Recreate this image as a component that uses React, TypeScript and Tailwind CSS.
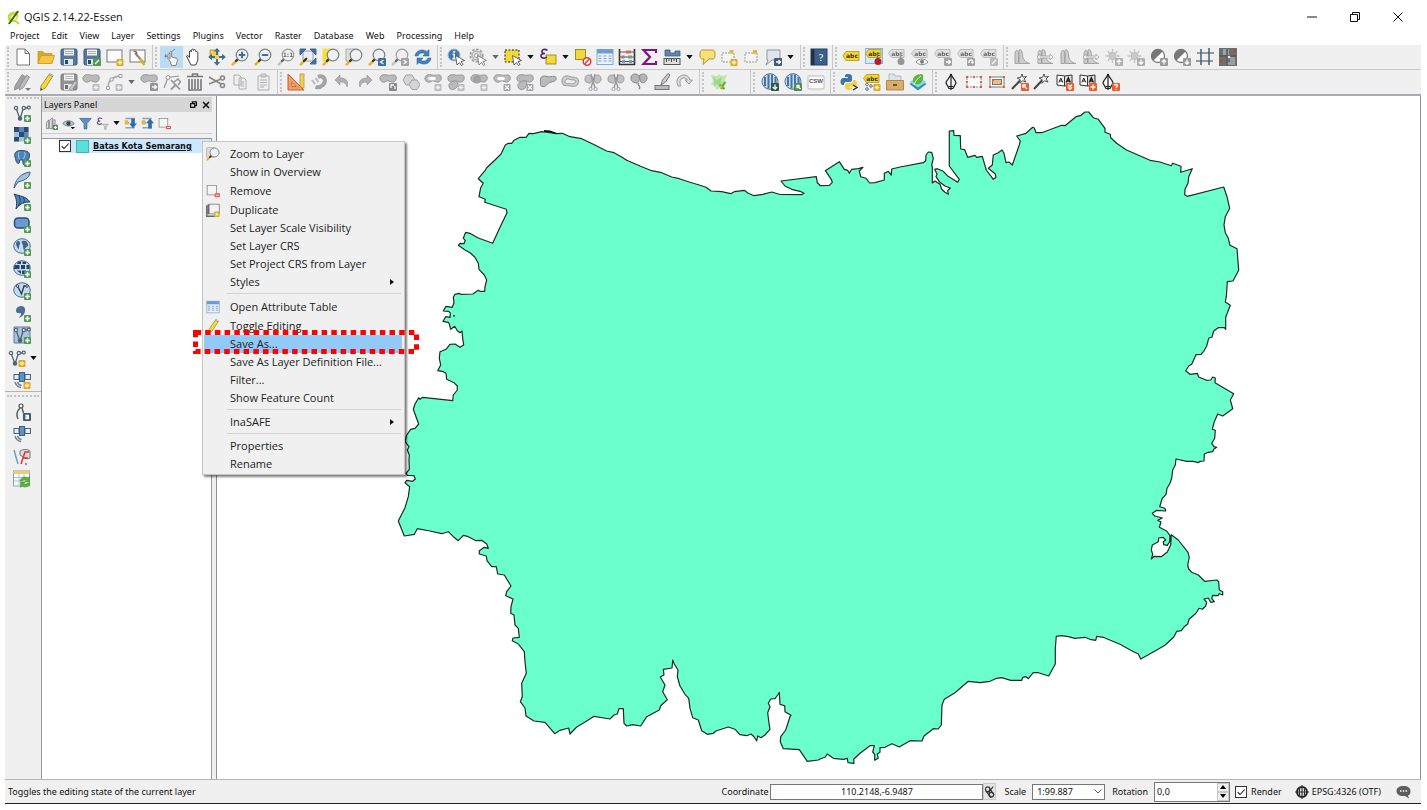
import type { ReactNode } from "react";

type Tool = { name: string; icon: ReactNode; drop?: boolean; off?: boolean; on?: boolean };

/* ---------- badges and shared shapes, all on an 18 x 18 grid ---------- */

const Plus = (
  <g>
    <rect x="11" y="11" width="7" height="7" rx="1" fill="#4f9a55" />
    <path d="M14.5 12.3v4.4M12.3 14.5h4.4" stroke="#fff" strokeWidth="1.6" />
  </g>
);
const Minus = (
  <g>
    <rect x="11" y="12" width="7" height="5" rx="1.5" fill="#ee5050" />
    <path d="M12.5 14.5h4" stroke="#fff" strokeWidth="1.3" />
  </g>
);
const Star = (
  <g>
    <rect x="10.5" y="11" width="7" height="7" rx="1" fill="#d9a91e" />
    <path d="M14 12v5M11.6 14.5h4.8M12.3 12.8l3.4 3.4M15.7 12.8l-3.4 3.4" stroke="#fff6c8" strokeWidth="0.9" />
  </g>
);
const Cross = (
  <g>
    <rect x="10.5" y="11" width="7" height="7" rx="1" fill="#8a8a8a" />
    <path d="M12 12.5l4 4M16 12.5l-4 4" stroke="#fff" strokeWidth="1.2" />
  </g>
);
const Handle = (
  <g strokeLinecap="round">
    <path d="M7.2 10.8L1.8 16.4" stroke="#e0b52c" strokeWidth="2.6" />
    <path d="M7.2 10.8L5 13" stroke="#333" strokeWidth="2.2" />
  </g>
);
const glass = (inner?: ReactNode) => (
  <g>
    {Handle}
    <circle cx="11" cy="7" r="5.8" fill="#eef1f4" stroke="#808080" strokeWidth="1.2" />
    {inner}
  </g>
);
const blob = (
  <path d="M1 6C.5 2 4.500 1 8 2s8-1.500 9 1.500-1 6-4 5.500-4-2-6-.5S1.500 9 1 6z" fill="#a8a8a8" stroke="#777" strokeWidth="1" />
);
const lowBlob = (
  <path d="M2 13.500c-1-3 2-3.500 3.500-5C7 7 11 8 11 10.500s-2 5.500-4.500 6-4-.5-4.500-3z" fill="#a8a8a8" stroke="#777" strokeWidth="1" />
);
const disk = (
  <g>
    <rect x="1" y="1" width="16" height="16" rx="1.500" fill="#54789f" stroke="#3b5778" />
    <rect x="4" y="1.500" width="10" height="6" fill="#f3f3f3" />
    <path d="M5 3.500h8M5 5.500h8" stroke="#999" strokeWidth="0.8" />
    <rect x="4" y="11" width="9" height="6" fill="#dfe5ea" />
    <rect x="5" y="12" width="3" height="4" fill="#2e4660" />
  </g>
);
const pencil = (
  <g>
    <path d="M4 13L12 1.500l3.500 2L8 15.500l-4.500 2z" fill="#f0d842" stroke="#96801c" strokeWidth="0.8" />
    <path d="M12 1.500l3.500 2 .6-1.200-3.400-2z" fill="#eee" stroke="#777" strokeWidth="0.600" />
    <path d="M3.500 17.500l.3-2.500 1.700 1.200z" fill="#333" />
  </g>
);
const page = <path d="M3 1h8l4.500 4.500V17H3zM11 1v4.500h4.500" fill="#fff" stroke="#777" />;
const sheet = <rect x="1" y="2" width="15" height="12" fill="#fbfbfb" stroke="#777" />;
const vee = (
  <g fill="#fff" stroke="#4f6575" strokeWidth="1.300">
    <path d="M3 4l4 11 3.500-11 5 0" fill="none" />
    <circle cx="3" cy="4" r="1.600" />
    <circle cx="7" cy="14.500" r="1.600" fill="#4f6575" />
    <circle cx="10.800" cy="4" r="1.600" />
    <circle cx="15.800" cy="3.600" r="1.500" />
  </g>
);
const globe = (
  <g fill="none" stroke="#4d6f96" strokeWidth="1">
    <ellipse cx="9" cy="8" rx="8.300" ry="7.300" fill="#c3daf0" />
  </g>
);
const table = (
  <g>
    <rect x="1" y="1.500" width="16" height="15" fill="#e9f2fb" stroke="#87a9d0" />
    <rect x="1" y="1.500" width="16" height="4" fill="#6d9ad2" />
    <path d="M2.500 8h3M7.500 8h3M12.500 8h3M2.500 10.500h3M7.500 10.500h3M12.500 10.500h3M2.500 13h3M7.500 13h3M12.500 13h3" stroke="#7fa3cd" strokeWidth="1.200" />
  </g>
);
const cursor = <path d="M8.500 7.500l9 5-3.500 1 2 3-1.500 1-2-3-2.500 2.500z" fill="#fff" stroke="#555" strokeWidth="0.9" />;
const tag = (fill: string, stroke: string) => (
  <g>
    <path d="M1 8l3-4.500h13v9H4z" fill={fill} stroke={stroke} strokeWidth="0.8" />
    <text x="10" y="10.300" fontSize="6" fontWeight="700" textAnchor="middle" fill="#333" fontFamily="DejaVu Sans, sans-serif">abc</text>
  </g>
);
const smallTag = (fill: string, stroke: string) => (
  <g>
    <path d="M.5 5.500l3-4H16v8H3.500z" fill={fill} stroke={stroke} strokeWidth="0.8" />
    <text x="9.200" y="7.700" fontSize="6" fontWeight="700" textAnchor="middle" fill="#333" fontFamily="DejaVu Sans, sans-serif">abc</text>
  </g>
);
const elephant = (
  <g>
    <path d="M2 8C1 4 3 1.500 8 1.500s8.500 1 8.500 4.500-1 5-2.500 5.500c0 2-.5 4.500-2.500 4.500S10 13 9.500 10.500c-1 .8-2 .8-3 0 .3 2 0 4-1.300 4S2.800 12 2 8z" fill="#4d83b8" stroke="#2a4f78" />
    <path d="M6 3c-1 3-.5 5 .5 7.500M11.500 3c1 2 .5 5-1.500 7" fill="none" stroke="#bcd4ea" strokeWidth="0.800" />
  </g>
);
const sat = (
  <g stroke="#34557a" strokeWidth="0.9">
    <rect x="1" y="3.500" width="5" height="5" fill="#e3ecf5" />
    <rect x="12" y="3.500" width="5.500" height="5" fill="#e3ecf5" />
    <rect x="6.500" y="1.500" width="5" height="9" fill="#5e93c8" />
    <path d="M2 11c1 3.500 3 5 6 5.500M4.500 11c.5 2 2 3 4 3.500" fill="none" strokeWidth="1.400" stroke="#6e8296" />
  </g>
);
const hist = (
  <g fill="#c2c2c2" stroke="#8a8a8a" strokeWidth="1">
    <path d="M2 15.500V6c0-4.500 3-5 3.500-1v10.500z" />
    <path d="M6 15.500V2c2-1 3 0 3.500 5 .5 5 3 7.500 7.500 8.500z" />
  </g>
);
const sun = (
  <g stroke="#b0b0b0" strokeWidth="1.300">
    <circle cx="7.500" cy="8" r="3.500" fill="#bdbdbd" />
    <path d="M7.500 1v2.500M7.500 12.500v2.500M.5 8h2.500M12 8h2.500M2.700 3.200l1.600 1.600M12.300 3.200l-1.600 1.600M2.700 12.800l1.600-1.600" />
  </g>
);
const contrast = (
  <g>
    <circle cx="8" cy="8" r="6.500" fill="#fff" stroke="#777" strokeWidth="1.300" />
    <path d="M3.400 12.600A6.500 6.500 0 0 1 12.600 3.400z" fill="#777" />
  </g>
);
const badge = (d: string, fill: string) => (
  <g>
    <rect x="10" y="10" width="8" height="8" rx="1" fill={fill} />
    <path d={d} fill="none" stroke="#fff" strokeWidth="1.300" />
  </g>
);
const up = badge("M14 16.500v-4M11.800 14l2.200-2.200 2.200 2.200", "#9a9a9a");
const down = badge("M14 11.500v4M11.800 14l2.200 2.200 2.200-2.200", "#9a9a9a");
const orange = "#f15a29";
const nib = (
  <g fill="none" stroke="#222" strokeWidth="1.200">
    <path d="M9 1C8 5 4 7 4 10l3 5.500h4l3-5.500c0-3-4-5-5-9z" fill="#f6f6f6" />
    <path d="M9 1v16" />
    <path d="M6.500 13.500h5" />
  </g>
);
const wand = (
  <g stroke="#444" strokeWidth="0.900" fill="none">
    <path d="M1 16l8-8.500" strokeWidth="2" />
    <path d="M11 1l1 3 3.500-.5-2.500 2.500 2 3-3.500-1.200-2.500 2.500.2-3.600-3-1.700 3.500-.7z" fill="#f4f4f4" />
  </g>
);
const labels = (
  <g>
    <path d="M1 2l7.500 1v10L1 12z" fill="#fff" stroke="#333" />
    <path d="M8.500 3L16 2v10l-7.500 1z" fill="#ddd" stroke="#333" />
    <path d="M2.800 9.500l2-4.500 2 4.500M3.500 8h2.500" stroke="#222" fill="none" />
    <path d="M10.300 9.500l2-4.500 2 4.500M11 8h2.500" stroke="#222" fill="none" strokeWidth="1.600" />
  </g>
);
const lens = <rect x="1.500" y="1.500" width="10" height="10" fill="#f3d838" stroke="#8b7a1d" strokeWidth="0.8" />;

const I = {
  newFile: page,
  open: (
    <g fill="#f3c645" stroke="#cf9c25" strokeWidth="0.9">
      <path d="M1 15.500V3.500h5l1.500 2H15v3" fill="#d9a42f" />
      <path d="M1 15.500L4 7.500h13.500L15 15.500z" />
    </g>
  ),
  save: disk,
  saveAs: <g>{disk}{badge("M12 16l4-4", "#4f9a55")}</g>,
  composer: <g>{sheet}{Star}</g>,
  composerMgr: (
    <g>
      {sheet}
      <path d="M6 5l9 10" stroke="#888" strokeWidth="2" />
      <path d="M11 11l4.500 6" stroke="#dcb02a" strokeWidth="2.600" />
      <path d="M4.500 3.500c2-1 4 1 3 3" fill="none" stroke="#777" strokeWidth="1.500" />
    </g>
  ),
  touch: (
    <g>
      <path d="M3 9L13 1M3 9l.5-3M3 9l3-.5" stroke="#777" fill="none" strokeWidth="0.900" />
      <path d="M8 13L5.500 10c1-1 2 .2 2.500.8V4.500c0-1.300 1.700-1.300 1.700 0V9l4.800 1.300c1 .4 1 1.500.7 3L14 17.500H9.500z" fill="#f7f7f7" stroke="#777" strokeWidth="0.900" />
    </g>
  ),
  pan: <path d="M6 17L3.500 12 1.500 8c1-1 2 0 3 1.500L4.500 3c1-1 1.700 0 1.800 1L6.800 1.500c1-1 1.800 0 1.900 1V2c1-1 2-.4 2 .8l.2 1c1-.8 1.900 0 1.900 1V12l-2 5z" fill="#fff" stroke="#444" />,
  panSel: (
    <g>
      <path d="M2 2h8v8H2z" fill="#f2d53c" stroke="#998420" strokeWidth="0.700" />
      <path d="M9 0l3.200 3.500H10v4.500h4V5.800L17.800 9 14 12.200V10h-4v4h2.200L9 17.800 5.800 14H8v-4H4v2.200L.2 9 4 5.800V8h4V3.500H5.800z" fill="#3e6d9d" />
      <circle cx="9" cy="9" r="2.200" fill="#f2d53c" />
    </g>
  ),
  zoomIn: glass(<path d="M11 3.800v6.400M7.800 7h6.400" stroke="#3b6ea5" strokeWidth="2" />),
  zoomOut: glass(<path d="M7.800 7h6.400" stroke="#3b6ea5" strokeWidth="2" />),
  zoomOne: glass(<text x="11" y="9.200" fontSize="6" fontWeight="700" textAnchor="middle" fill="#444" fontFamily="DejaVu Sans, sans-serif">1:1</text>),
  full: (
    <g>
      <rect x="4" y="3" width="10" height="10" fill="#e9edf1" stroke="#889" strokeWidth="0.800" />
      <path d="M1 1h6L1 7zM17 1h-6l6 6zM17 16v-6l-6 6z" fill="#3e6d9d" stroke="#3e6d9d" />
      {Handle}
    </g>
  ),
  zoomSel: <g><rect x="0.500" y="0.500" width="9" height="13" fill="#f3e13f" />{glass()}</g>,
  zoomLayer: <g><rect x="1" y="1" width="9" height="12" fill="#ddd" stroke="#999" strokeWidth="0.700" />{glass()}</g>,
  last: <g>{glass()}{badge("M15.500 12l-3 2 3 2", "#3b6ea5")}</g>,
  next: <g>{glass()}{badge("M12.500 12l3 2-3 2", "#888")}</g>,
  refresh: (
    <g fill="#3f82c4" stroke="#2d5f94" strokeWidth="0.500">
      <path d="M1 8C1.500 2.500 8 0 13 3.500L15 1.500V8H9l2-2.200C8.500 4 5 5 4 8z" />
      <path d="M17 10c-.5 5.500-7 8-12 4.500L3 16.500V10h6l-2 2.200c2.500 1.800 6 .8 7-2.200z" />
    </g>
  ),
  identify: (
    <g>
      <circle cx="7" cy="7" r="6" fill="#3f77b0" stroke="#9dbbdc" />
      <circle cx="7.200" cy="3.800" r="1.100" fill="#fff" />
      <path d="M7.200 6v5M5.500 6.200h1.700M5.500 10.800h3.400" stroke="#fff" strokeWidth="1.400" />
      {cursor}
    </g>
  ),
  gear: (
    <g>
      <circle cx="7.500" cy="7.500" r="6.200" fill="none" stroke="#888" strokeWidth="1.800" strokeDasharray="2.500 1.500" />
      <circle cx="7.500" cy="7.500" r="4.600" fill="#ccc" stroke="#888" />
      <circle cx="7.500" cy="7.500" r="1.800" fill="#fff" stroke="#888" />
      {cursor}
    </g>
  ),
  select: (
    <g>
      <rect x="1" y="2" width="14" height="12" fill="#f3d838" stroke="#222" strokeDasharray="2 1.500" />
      {cursor}
    </g>
  ),
  expr: (
    <g>
      <rect x="7" y="7" width="10" height="9" fill="#f3d838" stroke="#8b7a1d" strokeWidth="0.800" />
      <path d="M8.500 2.500C6 .5 2.500 1.500 3 4c.2 1.300 1.500 1.500 3 1.500C3.500 5.500 1.500 6.500 2 8.500c.5 2 4 2.200 6 .5" fill="none" stroke="#4d2a66" strokeWidth="1.600" />
    </g>
  ),
  deselect: (
    <g>
      {lens}
      <circle cx="13" cy="13.500" r="3.800" fill="#fff" stroke="#dc3c3c" strokeWidth="1.500" />
      <path d="M10.500 16l5-5" stroke="#dc3c3c" strokeWidth="1.500" />
    </g>
  ),
  table,
  abacus: (
    <g strokeWidth="1.200">
      <path d="M1.500 1v16M16.500 1v16M1 16.500h16" stroke="#333" strokeWidth="1.600" fill="none" />
      <path d="M1 4h16M1 9h16M1 13.500h16" stroke="#555" />
      <path d="M8 4h5M3.500 9h3" stroke="#cf6a5e" strokeWidth="3" />
      <path d="M10 9h4" stroke="#5dac68" strokeWidth="3" />
      <path d="M4 13.500h3M11 13.500h3" stroke="#6d9ccc" strokeWidth="3" />
    </g>
  ),
  sigma: <path d="M15 5V2H2.500L9 9l-6.500 7H15v-3" fill="none" stroke="#7d1683" strokeWidth="2.200" />,
  ruler: (
    <g>
      <path d="M2 2h5v3h5V3l5 0v5H2z" fill="#5f87ab" stroke="#3d5a78" strokeWidth="0.800" />
      <rect x="1" y="10.500" width="16" height="6" fill="#dedede" stroke="#555" />
      <path d="M3.500 11v3M6 11v2M8.500 11v3M11 11v2M13.500 11v3" stroke="#444" />
    </g>
  ),
  tip: <path d="M2 5c0-2 1-3 3-3h9c2 0 3 1 3 3v3c0 2-1 3-3 3h-3l-6 5.500 1-5.500H5c-2 0-3-1-3-3z" fill="#f7e07a" stroke="#b6952b" />,
  form: (
    <g>
      <rect x="2" y="5" width="12" height="9" fill="#f4f4f4" stroke="#999" strokeDasharray="2 1" />
      <path d="M9.500 2h4v4l-2-1.300L9.500 6z" fill="#e6b92a" />
      {Star}
    </g>
  ),
  anno: (
    <g>
      <rect x="3" y="5" width="12" height="9" fill="#f4f4f4" stroke="#999" strokeDasharray="2 1" />
      <path d="M11 2h4v4l-2-1.300L11 6z" fill="#e6b92a" />
    </g>
  ),
  moveAnno: (
    <g>
      <path d="M3 2h13v10H8l-6 5 2-5H3z" fill="#dfe5ea" stroke="#8b97a3" />
      {badge("M12 14h4M14.500 12l2 2-2 2", "#3e5a75")}
    </g>
  ),
  help: (
    <g>
      <rect x="1" y="1" width="16" height="16" fill="#3a6089" stroke="#27405c" />
      <rect x="1" y="1" width="3.500" height="16" fill="#1f3247" />
      <text x="11" y="13" fontSize="11" textAnchor="middle" fill="#fff" fontFamily="Liberation Serif, serif">?</text>
    </g>
  ),
  label: tag("#f4d62b", "#b5960f"),
  labelPin: (
    <g>
      <rect x="0.500" y="0.500" width="17" height="15" fill="#d6e8f7" stroke="#86b6e2" />
      {smallTag("#f4d62b", "#b5960f")}
      <path d="M12.500 4v7" stroke="#777" strokeWidth="1.500" />
      <circle cx="13" cy="13.500" r="3.500" fill="#b51f2a" />
    </g>
  ),
  labelRed: (
    <g>
      {smallTag("#ddd", "#999")}
      <path d="M12.500 4v7" stroke="#777" strokeWidth="1.500" />
      <circle cx="13" cy="13.500" r="3.500" fill="#777" />
    </g>
  ),
  labelEye: (
    <g>
      {smallTag("#ddd", "#999")}
      <path d="M5 14c3-4 9-4 12 0-3 3.500-9 3.500-12 0z" fill="#fff" stroke="#666" />
      <circle cx="11" cy="13.800" r="2" fill="#555" />
    </g>
  ),
  labelMove: <g>{smallTag("#ddd", "#999")}{badge("M12 14h4M14.500 12l2 2-2 2", "#888")}</g>,
  labelRot: <g>{smallTag("#ddd", "#999")}{badge("M12 15c0-4 4-4 4 0M14.500 14l1.500 1.500", "#888")}</g>,
  labelEdit: <g>{smallTag("#ddd", "#999")}{badge("M12 16l4-4", "#aaa")}</g>,
  hist,
  histArrow: <g>{hist}<path d="M1 9l3-3v2h10V6l3 3-3 3v-2H4v2z" fill="#eee" stroke="#8a8a8a" strokeWidth="0.800" /></g>,
  sunUp: <g>{sun}{up}</g>,
  sunDown: <g>{sun}{down}</g>,
  conUp: <g>{contrast}{up}</g>,
  conDown: <g>{contrast}{down}</g>,
  grid: (
    <g>
      <path d="M1 5h17M0 13h17" stroke="#444" strokeWidth="1.200" />
      <path d="M5 1v16M13 0v17" stroke="#3f5f7f" strokeWidth="1.500" />
    </g>
  ),
  georef: (
    <g>
      <path d="M0 0h18v18H0z" fill="#6d6f6c" />
      <path d="M4 1h6v6H4zM11 9h5v8h-5z" fill="#9b9d98" />
      <path d="M0 8h18M8 1v17" stroke="#5a5b59" strokeWidth="1.500" />
      <circle cx="15.500" cy="3" r="1.400" fill="#d33" />
      <circle cx="2" cy="13" r="1.400" fill="#d33" />
      <circle cx="5" cy="4" r="1.300" fill="#7fb2e5" />
      <circle cx="10" cy="9" r="1.300" fill="#dceafa" />
      <circle cx="10" cy="15.500" r="1.300" fill="#7fb2e5" />
    </g>
  ),
  edits: (
    <g transform="translate(-1 0)">
      <path d="M2 13L9 1.500l3 2L6 15l-4.500 2z" fill="#888" stroke="#777" />
      <path d="M7 13l6.500-11 3 2-6 10.500L6.500 17z" fill="#aaa" stroke="#777" />
      <path d="M12 15h6l-3 3z" fill="#555" />
    </g>
  ),
  pencil,
  saveEdits: <g>{disk}<path d="M9 16l6-8 2.500 1.500-6 8z" fill="#bbb" stroke="#666" strokeWidth="0.700" /></g>,
  addFeat: <g>{blob}{Star}</g>,
  curve: (
    <g>
      <path d="M3 15C3 8 6 4 15 3" fill="none" stroke="#888" strokeWidth="1.300" />
      <path d="M1.500 13.500h3v3h-3zM5 5h3v3H5zM14 1.500h3v3h-3z" fill="#fff" stroke="#888" />
      {Star}
    </g>
  ),
  moveFeat: <g>{blob}{badge("M12 14h4M14.500 12l2 2-2 2", "#777")}</g>,
  node: (
    <g>
      <path d="M1 15L5 4.500 16 3" fill="none" stroke="#777" strokeWidth="1.200" />
      <circle cx="5" cy="4.500" r="2" fill="#fff" stroke="#777" />
      <path d="M8 7l9 9.500M8 16.500l5-5" stroke="#777" strokeWidth="1.800" />
      <path d="M11 9l4-3 2.500 3-2.500 3" fill="none" stroke="#777" strokeWidth="1.500" />
    </g>
  ),
  trash: <path d="M1 3.500h16M6.500 3V1h5v2M3 6v11h12V6M6 6v10M9 6v10M12 6v10" fill="none" stroke="#777" strokeWidth="1.600" />,
  cut: (
    <g fill="none" stroke="#888" strokeWidth="1.600">
      <path d="M1 4l12 7M1 11l12-5" />
      <circle cx="14.500" cy="5" r="2" />
      <circle cx="14.500" cy="12.500" r="2" />
    </g>
  ),
  copy: <path d="M3 2h5l2 2v8H3zM8 5h5l2 2v9H8zM10 9h3M10 11h3M10 13h3" fill="#f1f1f1" stroke="#999" />,
  paste: <path d="M4 3h11v14H4zM7 1h5v3H7zM6 7h7M6 9.500h7M6 12h7M6 14h4" fill="#f1f1f1" stroke="#999" />,
  angle: (
    <g>
      <rect x="13" y="1" width="4" height="14" fill="#f0d05a" stroke="#b78a2a" strokeWidth="0.700" />
      <path d="M1 1v16h16zM5 9.500v4h4z" fill="#f19a6a" stroke="#c8632e" fillRule="evenodd" />
    </g>
  ),
  magnet: (
    <g fill="none">
      <path d="M8 3.800c6-2 9 4 5 8-2 2-5 3-7.500 2" stroke="#888" strokeWidth="4" />
      <path d="M2 7l3 4M5.500 5l3 4" stroke="#aaa" strokeWidth="2" />
    </g>
  ),
  undo: <path d="M2 7l5-5v3c6 0 9 3 7 9-1-4-3-5-7-5v3z" fill="#b0b0b0" stroke="#909090" strokeWidth="0.600" />,
  redo: <path d="M16 7l-5-5v3C5 5 2 8 4 14c1-4 3-5 7-5v3z" fill="#b0b0b0" stroke="#909090" strokeWidth="0.600" />,
  rotateFeat: <g>{blob}{badge("M12 15v-3h3M16 13v3", "#666")}</g>,
  simplify: (
    <g fill="#ccc" stroke="#888">
      <path d="M4 2h6l3 5-3 5H4L1 7z" />
      <path d="M10 7h5l3 4.500-3 5h-5l-3-5z" />
    </g>
  ),
  addRing: <g>{blob}<ellipse cx="8" cy="5.500" rx="4" ry="1.800" fill="#fff" />{Star}</g>,
  addPart: <g>{blob}{lowBlob}{Star}</g>,
  fillRing: <g>{blob}<circle cx="7" cy="6.500" r="4" fill="#888" />{Star}</g>,
  delRing: <g>{blob}<ellipse cx="8" cy="5.500" rx="4" ry="1.800" fill="#fff" />{Cross}</g>,
  delPart: <g>{blob}{lowBlob}{Cross}</g>,
  reshape: <path d="M1.500 8C1 3 4.500 2.500 8 3.500s8-1.500 9 1-1 4-5 4.500-4 5-8 4.500-2-3-2.500-5.500z" fill="#bbb" stroke="#888" />,
  offset: (
    <g fill="#ccc" stroke="#999">
      <path d="M1 9C.5 3 5 2 9 3.500S17 3 17.500 8s-4 6-8 5S1.500 14 1 9z" />
      <path d="M4 9c0-3 3-3.500 5-2.500s5-.5 5.500 1.500-2 3-5 2.500S4 12 4 9z" fill="#eee" />
    </g>
  ),
  split: (
    <g fill="#c2c2c2" stroke="#999">
      <path d="M1 6c0-4 4-5 6-3s1 8-2 7-4-1-4-4zM11 3c2-2 6-1 6 3s-5 5-6 3-1-5 0-6z" />
      <path d="M7 1l4 14M11 1L7 15" fill="none" strokeWidth="1.400" />
      <circle cx="6.500" cy="16" r="1.600" fill="#fff" />
      <circle cx="11.500" cy="16" r="1.600" fill="#fff" />
    </g>
  ),
  merge: (
    <g fill="#b5b5b5" stroke="#888">
      <path d="M1 5c0-4 4-5 7-3s1 9-2 8-5-1-5-5zM10 2c3-2 7-1 7 3s-5 6-6 4-2-6-1-7z" />
      <path d="M9 10c-3 2 3 3 0 6" fill="none" strokeWidth="1.400" />
    </g>
  ),
  mergeAttr: (
    <g>
      <rect x="2" y="12.500" width="14" height="4" fill="#bbb" stroke="#777" />
      <path d="M8 12l1.500-5L15 .5l2 1.500-4.500 7z" fill="#ccc" stroke="#777" />
    </g>
  ),
  rotSym: <path d="M3 13C0 7 4 2 9 2c3 0 5 2 6 5h2.500L14 11 10 7h2.500C11 4 5 4 5 9c0 2 0 3 1 4z" fill="#ddd" stroke="#999" />,
  plugin: (
    <g>
      <path d="M1 2l6 1 2-2 3 2 5-1-2 5 2 3-3 2 1 5-5-2-4 2-1-4-4-1 2-4z" fill="#bfe6b4" />
      <path d="M3 3l4 4 5-3-1 6 4 2-5 1-4-2-2 3 0-6z" fill="#9ad98f" />
      <path d="M15 9l-4 7M9.500 12l5 4" stroke="#5fa83f" strokeWidth="2" />
      <circle cx="11" cy="14" r="1.500" fill="#f0b72e" />
    </g>
  ),
  webDown: (
    <g>
      <ellipse cx="9" cy="8.500" rx="8" ry="7.800" fill="#cfd8e2" stroke="#4d6f96" />
      <path d="M4 4v9M7.500 1.500v14M11 1.500v14M14.500 4v6" stroke="#3f74ad" strokeWidth="2" />
      {badge("M14 11.500v4M11.800 14l2.200 2.200 2.200-2.200", "#2b5a3d")}
    </g>
  ),
  webFind: (
    <g>
      <ellipse cx="9" cy="8.500" rx="8" ry="7.800" fill="#cfd8e2" stroke="#4d6f96" />
      <path d="M4 4v9M7.500 1.500v14M11 1.500v14M14.500 4v6" stroke="#3f74ad" strokeWidth="2" />
      {badge("M13 12.500h2v2h-2zM15 14.500l1.500 1.500", "#4d8b57")}
    </g>
  ),
  csw: (
    <g>
      <rect x="1" y="3" width="16" height="13" rx="1" fill="#fdfdfd" stroke="#bbb" />
      <text x="9" y="9.500" fontSize="6" fontWeight="700" textAnchor="middle" fill="#555" fontFamily="Liberation Sans, sans-serif">CSW</text>
    </g>
  ),
  python: (
    <g>
      <path d="M8 1c3 0 4 1 4 2.500V7c0 1.200-1 2-2 2H6c-1.500 0-2 1-2 3H3C1 12 .5 10 .5 8.500S1.500 5 3.500 5H8V4H5V3c0-1.500 1-2 3-2z" fill="#3c75a8" />
      <path d="M9 17c-3 0-4-1-4-2.500V12c0-1.200 1-2 2-2h4c1.500 0 2-1 2-3h1.500c2 0 2.500 2 2.500 3.500s-1 3-3 3H9v1h3v.8c0 1.200-1 1.700-3 1.700z" fill="#f6cf45" />
      <path d="M13 12l4 2.500-4 2.500" fill="none" stroke="#333" strokeWidth="1.300" />
    </g>
  ),
  labelStar: (
    <g>
      {smallTag("#f4d62b", "#b5960f")}
      <g fill="#fff" stroke="#4c6f9c">
        <circle cx="4" cy="11.500" r="1.300" />
        <circle cx="8" cy="13" r="1.300" />
        <circle cx="4" cy="16" r="1.300" />
      </g>
      {Star}
    </g>
  ),
  drawer: (
    <g>
      <path d="M3 9V1h5l1 2h6V9z" fill="#d7e6ea" stroke="#8fa9b0" strokeWidth="0.700" />
      <path d="M.5 7.500h17V17H.5z" fill="#d9ad6c" stroke="#a97733" strokeWidth="0.800" />
      <path d="M7 12h4" stroke="#6d4718" strokeWidth="1.800" />
    </g>
  ),
  leaf: (
    <g>
      <path d="M.5 11L9 5.500l8.500 5.500L9 17.500z" fill="#2196b8" />
      <path d="M.5 9L9 4l8.500 5L9 14.500z" fill="#8fd8e8" />
      <path d="M4 9C3 4 7 1 13.500 1 16 7 12 12 7 11.500z" fill="#5fb53c" />
      <path d="M5 12c1-4 4-7 7-9" stroke="#d7f3c8" fill="none" />
    </g>
  ),
  nib,
  bbox: (
    <g>
      <rect x="2" y="4" width="14" height="10" fill="#fff" stroke="#88a" strokeDasharray="2 1" />
      <path d="M1 3h2v2H1zM8 3h2v2H8zM15 3h2v2h-2zM1 13h2v2H1zM8 13h2v2H8zM15 13h2v2h-2zM1 8h2v2H1zM15 8h2v2h-2z" fill={orange} />
    </g>
  ),
  bboxFill: (
    <g>
      <rect x="2" y="4" width="14" height="10" fill="#fff" stroke="#777" />
      <rect x="4.500" y="6.500" width="9" height="5" fill="#ecbd86" stroke="#777" />
      <path d="M1 3h2v2H1zM15 3h2v2h-2zM1 13h2v2H1zM15 13h2v2h-2zM4 6h2v2H4zM12 10h2v2h-2z" fill={orange} />
    </g>
  ),
  wandFix: <g>{wand}{badge("M12 12l4 4M12 15v-3h3", orange)}</g>,
  wand,
  lblDown: <g>{labels}{badge("M12 11.800l2 2 2-2M12 14.300l2 2 2-2", orange)}</g>,
  lblPlus: <g>{labels}{badge("M14 11.500v5M11.500 14h5", orange)}</g>,
  nibHelp: <g><g transform="translate(-3 0)">{nib}</g>{badge("M12.500 13c0-2 3-2 3 0 0 1-1.500 1-1.500 2M14 16v1", orange)}</g>,
  addVector: <g>{vee}{Plus}</g>,
  addRaster: (
    <g>
      <rect x="1" y="1" width="14.500" height="14.500" fill="#9fc0e2" />
      <path d="M1 1h5v5H1zM11 1h4.500v5H11zM6 6h5v5H6zM1 11h5v4.500H1z" fill="#2c4c72" />
      <path d="M6 1h5v5H6zM11 6h4.500v5H11z" fill="#5d86b4" />
      {Plus}
    </g>
  ),
  addPg: <g>{elephant}{Plus}</g>,
  addLite: <g><path d="M1 17C2 9 8 2 17 1c0 5-4 8-12 10z" fill="#9fc0df" stroke="#3f6288" />{Plus}</g>,
  addMssql: <g><path d="M1 1c5 2 12 2 16 8-5 0-10 1-14 7 1-5 1-10-2-15zM6 3c2 4 1 7-.5 10M10 4c2 3 1.500 4 0 6.500" fill="#4d83b8" stroke="#23405f" />{Plus}</g>,
  addOra: <g><rect x="1.500" y="3" width="14.500" height="10" rx="3.500" fill="#6c9bd0" stroke="#2a4f78" strokeWidth="1.500" />{Plus}</g>,
  addWms: <g>{globe}<path d="M3 5c2-3 4-2 4 0s-1 2-1 5-3-2-3-5zM9 3c3-1 5 0 6 3s-2 2-3 5-2-1-2-3-2-3-1-5z" fill="#41648a" />{Plus}</g>,
  addWcs: <g>{globe}<path d="M1.500 5h5v4H1zM8 5h4v4H8zM13.500 5h3v4h-3zM4 10.500h4V14zM9 10.500h4V14H9zM5 1.500h3v2.500H4zM9.500 1.500L13 2v2H9.500z" fill="#24466c" />{Plus}</g>,
  addWfs: <g>{globe}<path d="M4.500 4l4 8 2.500-8h3" fill="none" stroke="#2b3f53" strokeWidth="1.400" /><circle cx="4.500" cy="4" r="1.300" fill="#fff" stroke="#2b3f53" /><circle cx="14" cy="4" r="1.300" fill="#fff" stroke="#2b3f53" />{Plus}</g>,
  addCsv: <g><path d="M5 3c4-2.500 8 0 7 4.500-.6 3-3 5.500-6.500 6.500 2-2 3-3.500 2.500-5-3 1-5.500-.5-5-3 .2-1.300 1-2.300 2-3z" fill="#4b6f94" />{Plus}</g>,
  addVirt: <g><path d="M1 1h16v16H1z" fill="#a9c4de" stroke="#5f7f9f" />{vee}{Plus}</g>,
  newShape: <g>{vee}{Star}</g>,
  gps: <g>{sat}{Star}</g>,
  evis: (
    <g>
      <circle cx="8" cy="3" r="2" fill="#fff" stroke="#444" strokeWidth="1.200" />
      <path d="M7 5C4 8 3 12 5 16M9 5l1.500 5" fill="none" stroke="#555" strokeWidth="1.400" />
      {badge("M16 12.500h-3v3h3M14 14h2", "#3e5a75")}
    </g>
  ),
  gpsTool: sat,
  topo: (
    <g fill="none">
      <path d="M1 2l4 14" stroke="#6f9cc8" strokeWidth="1.500" />
      <path d="M7 3c3-2 8-2 10 0v7c-2 1-4 1-5 0L7 7z" fill="#ddd" stroke="#777" />
      <path d="M8 16l4-12h4M10 10h5" stroke="#d93434" strokeWidth="1.500" />
      <circle cx="13" cy="16" r="1.200" fill="#6f9cc8" />
    </g>
  ),
  tableSync: (
    <g>
      <rect x="0.500" y="1" width="16" height="15" fill="#fbfdff" stroke="#7ba3cc" />
      <rect x="0.500" y="1" width="16" height="3" fill="#f0cf62" />
      <path d="M1 7.500h15M1 11h15M6 4v12M11 4v12" stroke="#a9c6e4" />
      <path d="M7 11c1-4 5-5 8-3l1.500-1.500V12H12l1.500-1.500C11.500 9.500 10 9.500 9.500 11zM17 13c-1 4-5 5-8 3l-1.500 1.500V12H12l-1.500 1.500c2 1 3.500 1 4-.5z" fill="#5cb531" stroke="#3f8a1e" strokeWidth="0.500" />
    </g>
  ),
  style: (
    <g fill="#dcdcdc" stroke="#777">
      <path d="M2 16V8l3-4v12zM6 16V5l4-4v15z" />
      <path d="M11 16V4h3v6" />
      {Plus}
    </g>
  ),
  eye: (
    <g>
      <path d="M1 9c4-5 12-5 16 0-4 4.500-12 4.500-16 0z" fill="#bccbda" stroke="#555" />
      <circle cx="9" cy="9" r="3" fill="#345" />
      <path d="M12 14h6l-3 3z" fill="#111" />
    </g>
  ),
  filter: <path d="M1 2h16l-6 7v7.500H7V9z" fill="#5b8fc6" stroke="#3d6593" />,
  exprFilter: (
    <g>
      <path d="M8.500 2.500C6 .5 2.500 1.500 3 4c.2 1.300 1.500 1.500 3 1.500C3.500 5.500 1.500 6.500 2 8.500c.5 2 4 2.200 6 .5" fill="none" stroke="#6d4a86" strokeWidth="1.600" />
      <path d="M9 10h8l-3 3v4h-2v-4z" fill="#ddd" stroke="#999" />
    </g>
  ),
  expand: (
    <g>
      <path d="M2 2h13M2 8h5M2 15h13" stroke="#8aa5c2" strokeWidth="2" />
      <path d="M1 4.500h5v6H1z" fill="#efb13c" />
      <path d="M10 2h5v7h3l-5.500 6.500L7 9h3z" fill="#2f6cab" />
    </g>
  ),
  collapse: (
    <g>
      <path d="M2 2h13M2 8h5M2 15h13" stroke="#8aa5c2" strokeWidth="2" />
      <path d="M1 4.500h5v6H1z" fill="#efb13c" />
      <path d="M10 16h5V8.500h3L12.500 2 7 8.500h3z" fill="#2f6cab" />
    </g>
  ),
  remove: <g><rect x="1.500" y="2" width="12" height="12" fill="#f5f5f5" stroke="#888" />{Minus}</g>,
  duplicate: (
    <g>
      <path d="M1 3v14h13M3 1.500v13" stroke="#666" strokeWidth="1.800" fill="none" />
      <rect x="4" y="1.500" width="13" height="12.500" fill="#f3f3f3" stroke="#777" />
      {Star}
    </g>
  ),
};

const Icon = ({ art, className = "size-[18px]" }: { art: ReactNode; className?: string }) => (
  <svg viewBox="0 0 18 18" className={`${className} shrink-0`} aria-hidden="true">
    {art}
  </svg>
);

const Caret = ({ off }: { off?: boolean }) => (
  <svg viewBox="0 0 8 5" className="h-[4px] w-[7px] shrink-0" aria-hidden="true">
    <path d="M0 0h8L4 5z" fill={off ? "#666" : "#111"} />
  </svg>
);

/* ---------- tool bars ---------- */

function ToolGroup({ tools, width, tail = "pr-[3px]", last }: { tools: Tool[]; width: string; tail?: string; last?: boolean }) {
  return (
    <div className={`flex h-full items-center ${width} ${tail} ${last ? "" : "border-r border-[#c9c9c9]"}`}>
      <span className="ml-[2px] mr-[3px] h-[20px] w-[2px] shrink-0 border-l-2 border-dotted border-[#c4c4c4]" />
      {tools.map((t) => (
        <button
          key={t.name}
          type="button"
          aria-label={t.name}
          className={`flex h-[22px] min-w-0 items-center ${t.drop ? "flex-[34] gap-[5px] pl-[2px]" : "flex-[23] justify-center"} ${t.on ? "bg-[#bcdcf4]" : ""}`}
        >
          <Icon art={t.icon} className={t.off ? "size-[18px] opacity-75 grayscale" : "size-[18px]"} />
          {t.drop && <Caret off={t.off} />}
        </button>
      ))}
    </div>
  );
}

const fileTools: Tool[] = [
  { name: "New", icon: I.newFile },
  { name: "Open", icon: I.open },
  { name: "Save", icon: I.save },
  { name: "Save project as", icon: I.saveAs },
  { name: "New print composer", icon: I.composer },
  { name: "Composer manager", icon: I.composerMgr },
];
const navTools: Tool[] = [
  { name: "Touch zoom and pan", icon: I.touch, on: true },
  { name: "Pan map", icon: I.pan },
  { name: "Pan to selection", icon: I.panSel },
  { name: "Zoom in", icon: I.zoomIn },
  { name: "Zoom out", icon: I.zoomOut },
  { name: "Zoom to native resolution", icon: I.zoomOne, off: true },
  { name: "Zoom full", icon: I.full },
  { name: "Zoom to selection", icon: I.zoomSel },
  { name: "Zoom to layer extent", icon: I.zoomLayer },
  { name: "Zoom last", icon: I.last },
  { name: "Zoom next", icon: I.next, off: true },
  { name: "Refresh", icon: I.refresh },
];
const attributeTools: Tool[] = [
  { name: "Identify features", icon: I.identify },
  { name: "Run feature action", icon: I.gear, off: true, drop: true },
  { name: "Select features", icon: I.select, drop: true },
  { name: "Select by expression", icon: I.expr, drop: true },
  { name: "Deselect all", icon: I.deselect },
  { name: "Attribute table", icon: I.table },
  { name: "Field calculator", icon: I.abacus },
  { name: "Statistics", icon: I.sigma },
  { name: "Measure", icon: I.ruler, drop: true },
  { name: "Map tips", icon: I.tip },
  { name: "New bookmark", icon: I.form },
  { name: "Show bookmarks", icon: I.anno },
  { name: "Text annotation", icon: I.moveAnno, drop: true },
];
const labelTools: Tool[] = [
  { name: "Labeling options", icon: I.label },
  { name: "Highlight pinned labels", icon: I.labelPin },
  { name: "Pin labels", icon: I.labelRed, off: true },
  { name: "Show and hide labels", icon: I.labelEye, off: true },
  { name: "Move label", icon: I.labelMove, off: true },
  { name: "Rotate label", icon: I.labelRot, off: true },
  { name: "Change label", icon: I.labelEdit, off: true },
];
const rasterTools: Tool[] = [
  { name: "Local histogram stretch", icon: I.hist, off: true },
  { name: "Full histogram stretch", icon: I.histArrow, off: true },
  { name: "Local cumulative cut", icon: I.hist, off: true },
  { name: "Full cumulative cut", icon: I.histArrow, off: true },
  { name: "Increase brightness", icon: I.sunUp, off: true },
  { name: "Decrease brightness", icon: I.sunDown, off: true },
  { name: "Increase contrast", icon: I.conUp },
  { name: "Decrease contrast", icon: I.conDown },
  { name: "Grid", icon: I.grid },
  { name: "Georeferencer", icon: I.georef },
];
const editTools: Tool[] = [
  { name: "Current edits", icon: I.edits, off: true },
  { name: "Toggle editing", icon: I.pencil },
  { name: "Save layer edits", icon: I.saveEdits, off: true },
  { name: "Add feature", icon: I.addFeat, off: true },
  { name: "Add circular string", icon: I.curve, off: true, drop: true },
  { name: "Move feature", icon: I.moveFeat, off: true },
  { name: "Node tool", icon: I.node, off: true },
  { name: "Delete selected", icon: I.trash },
  { name: "Cut features", icon: I.cut },
  { name: "Copy features", icon: I.copy, off: true },
  { name: "Paste features", icon: I.paste, off: true },
];
const advancedTools: Tool[] = [
  { name: "Advanced digitizing", icon: I.angle },
  { name: "Tracing", icon: I.magnet, off: true },
  { name: "Undo", icon: I.undo },
  { name: "Redo", icon: I.redo },
  { name: "Rotate features", icon: I.rotateFeat, off: true },
  { name: "Simplify feature", icon: I.simplify, off: true },
  { name: "Add ring", icon: I.addRing, off: true },
  { name: "Add part", icon: I.addPart, off: true },
  { name: "Fill ring", icon: I.fillRing, off: true },
  { name: "Delete ring", icon: I.delRing, off: true },
  { name: "Delete part", icon: I.delPart, off: true },
  { name: "Reshape features", icon: I.reshape },
  { name: "Offset curve", icon: I.offset },
  { name: "Split features", icon: I.split },
  { name: "Split parts", icon: I.split },
  { name: "Merge features", icon: I.merge },
  { name: "Merge attributes", icon: I.mergeAttr },
  { name: "Rotate point symbols", icon: I.rotSym },
];
const webTools: Tool[] = [
  { name: "Download", icon: I.webDown },
  { name: "Search", icon: I.webFind },
  { name: "Catalogue client", icon: I.csw },
];
const pluginTools: Tool[] = [
  { name: "Python console", icon: I.python },
  { name: "Label tools", icon: I.labelStar },
  { name: "File drawer", icon: I.drawer },
  { name: "Leaf layers", icon: I.leaf },
];
const safeTools: Tool[] = [
  { name: "Toggle dock", icon: I.nib },
  { name: "Show extent", icon: I.bbox },
  { name: "Analysis extent", icon: I.bboxFill },
  { name: "Minimum needs", icon: I.wandFix },
  { name: "Keywords wizard", icon: I.wand },
  { name: "Impact function wizard", icon: I.lblDown },
  { name: "Add layers", icon: I.lblPlus },
  { name: "InaSAFE help", icon: I.nibHelp },
];
const layerTools: Tool[] = [
  { name: "Add vector layer", icon: I.addVector },
  { name: "Add raster layer", icon: I.addRaster },
  { name: "Add PostGIS layer", icon: I.addPg },
  { name: "Add SpatiaLite layer", icon: I.addLite },
  { name: "Add MSSQL layer", icon: I.addMssql },
  { name: "Add Oracle layer", icon: I.addOra },
  { name: "Add WMS layer", icon: I.addWms },
  { name: "Add WCS layer", icon: I.addWcs },
  { name: "Add WFS layer", icon: I.addWfs },
  { name: "Add delimited text layer", icon: I.addCsv },
  { name: "Add virtual layer", icon: I.addVirt },
  { name: "New shapefile layer", icon: I.newShape, drop: true },
  { name: "GPS device", icon: I.gps },
];
const sideTools: Tool[] = [
  { name: "Coordinate capture", icon: I.evis },
  { name: "GPS tools", icon: I.gpsTool },
  { name: "Topology checker", icon: I.topo },
  { name: "Table manager", icon: I.tableSync },
];

/* ---------- map outline: each stretch is digitised at three units per pixel from its own origin ---------- */

const stretches: [number, number, string][] = [
  [400, 100, "28,1065 22,1050 27,1040 15,1025 20,1005 32,988 45,985 56,972 48,950 40,928 45,912 56,893 60,898 68,892 158,902 160,885 172,870 172,858 162,848 140,838 138,820 130,815 113,812 122,795 118,775 120,755 138,748 150,733 165,732 180,742 191,735 188,715 186,693 180,698 172,692 164,679 152,688 148,672 145,667 129,664 137,650 150,652 151,638 145,634 130,633 138,619 157,622 162,608 160,592 165,583 177,580 182,583 218,582 235,571 240,574 254,574 255,560 260,540 253,525 237,508 235,490 225,472 210,458 195,450 175,436 180,430 192,431 196,421 190,415 197,397 212,401 235,414 278,430 300,382 321,338 319,328 254,307 256,298 237,290 242,263 250,250 235,236 255,212 260,203 285,180 303,162 316,135 325,130 335,130 342,121 360,112 378,112 387,100 400,101 425,95 435,96 470,101 487,100 510,110 545,116 580,133 620,153 642,158 665,171 680,181 720,198 755,212 785,218 815,231 838,236 870,247 900,256 918,262 933,273 965,275 992,281 1003,275 1033,271 1045,280 1062,287 1088,283 1115,276 1138,283 1205,284 1212,280 1200,274 1175,268 1155,258 1143,243 1249,230 1252,248 1260,256"],
  [820, 100, "0,257 28,256 37,247 34,238 16,212 58,185 73,208 83,211 88,220 95,208 115,206 129,202 118,213 122,230 138,235 149,249 165,248 193,240 193,220 205,214 214,225 215,207 240,201 310,188 317,182 318,165 325,156 335,157 340,175 335,195 337,200 337,249 345,243 360,253 365,268 375,277 385,283 383,272 391,264 375,258 358,245 348,230 351,222 344,208 352,206 370,214 382,227 413,247 418,238 388,198 388,93 401,92 402,106 421,107 422,147 434,149 443,172 465,166 470,172 487,169 499,210 520,238 528,232 526,222 505,205 517,195 520,165 535,158 546,150 552,160 558,188 567,186 577,195 598,135 601,123 590,108 618,100 638,82 643,84 648,98 665,98 725,76 735,77 768,50 783,46 795,36 806,36 820,53 835,58 855,85 855,97 871,103 872,113 890,130 918,149 990,181 1020,186 1054,197 1058,190 1083,199 1082,217 1117,206 1106,230 1104,250 1095,268 1094,284 1102,289 1211,261 1221,290 1229,325 1216,350 1212,375 1216,398 1225,415 1230,436 1251,446 1256,511 1239,543 1222,545 1219,590 1216,606 1231,616 1217,652 1217,688 1213,683 1195,683 1181,693 1176,711 1166,715 1160,738 1151,754 1143,763 1128,764 1115,793 1106,798 1097,812 1110,823 1132,820 1136,831 1160,841 1172,840 1178,831 1186,834 1185,848 1241,881 1231,900 1235,915 1238,926 1208,948 1193,942 1183,965 1177,988 1186,991 1184,1015 1175,1030 1182,1040 1190,1042 1181,1048 1178,1055 1165,1057 1153,1062"],
  [820, 440, "1152,63 1140,64 1135,68 1120,64 1100,64 1068,57 1066,75 1058,90 1055,115 1050,130 1041,145 1038,163 1027,175 1019,200 1035,205 1037,213 1010,211 997,220 1004,228 1027,234 1013,241 1023,246 1018,262 1040,273 1050,287 1049,305 1042,316 1031,314 1030,305 1037,300 1030,292 1016,294 1015,305 997,315 994,330 998,343 994,357 1002,349 1024,350 1042,336 1052,315 1054,284 1075,300 1104,337 1108,352 1103,375 1106,387 1115,397 1135,405 1154,424 1190,420 1196,425 1198,450 1208,455 1208,465 1198,461 1194,467 1178,466 1175,475 1183,485 1172,487 1165,474 1152,477 1160,487 1157,498 1147,508 1137,505 1128,520 1107,538 1103,552 1093,560 1084,572 1070,574 1062,590 1036,615 1000,636 962,657 955,642 935,632 900,613 862,597 850,592 830,589 827,601 810,598 795,592 765,595 745,590 725,587 709,589 706,625 706,672 686,708 655,698 640,698 625,716 618,710 608,712 605,721 572,721 545,713 530,715 510,724 480,728 445,724 405,758 373,778 366,795 364,855 355,867 340,866 312,888 306,903 270,902 238,921 216,911 195,922 180,923 180,937 172,942 175,955 164,961 164,943 158,936 163,917 150,917 120,940 101,958 102,970 84,968 82,955 70,958 40,955 22,942 16,951 0,957"],
  [390, 440, "1285,960 1252,964 1228,929 1180,926 1171,905 1172,890 1187,870 1200,830 1203,826 1185,815 1184,797 1170,793 1168,757 1163,765 1155,776 1142,777 1135,790 1140,800 1133,818 1137,850 1140,868 1125,885 1113,893 1103,888 1100,903 1092,890 1083,882 1070,887 1050,884 1035,868 1015,861 978,873 970,880 952,883 935,872 925,840 908,833 900,805 896,775 885,763 870,738 862,710 864,690 853,672 848,660 846,684 820,688 822,705 811,711 825,735 818,755 832,779 812,797 808,810 770,830 752,858 728,854 710,858 702,850 700,806 687,806 682,822 672,825 660,837 612,829 590,843 560,861 540,882 536,864 510,871 494,881 465,847 432,843 408,828 405,804 391,785 397,770 395,730 409,700 405,665 403,635 385,612 367,602 369,594 388,592 385,565 375,555 372,525 362,520 363,500 369,477 347,467 350,455 363,438 343,405 323,402 319,380 305,380 291,362 289,348 268,342 268,332 283,322 295,325 290,312 275,301 258,302 235,290 220,286 205,302 190,290 175,275 155,281 120,273 82,266 73,283 43,288 25,243 45,203 55,170 59,140 45,128 50,121 68,124 76,117 72,107 52,106 48,100 58,88 57,60"],
];
const outline = stretches
  .map(([ox, oy, pts]) =>
    pts
      .split(" ")
      .map((p) => {
        const [x, y] = p.split(",").map(Number);
        return `${(ox + x / 3).toFixed(1)},${(oy + y / 3).toFixed(1)}`;
      })
      .join(" "),
  )
  .join(" ");

/* ---------- context menu ---------- */

type Entry = { label: string; icon?: ReactNode; sub?: boolean; hot?: boolean } | null;
const entries: Entry[] = [
  { label: "Zoom to Layer", icon: I.zoomLayer },
  { label: "Show in Overview" },
  { label: "Remove", icon: I.remove },
  { label: "Duplicate", icon: I.duplicate },
  { label: "Set Layer Scale Visibility" },
  { label: "Set Layer CRS" },
  { label: "Set Project CRS from Layer" },
  { label: "Styles", sub: true },
  null,
  { label: "Open Attribute Table", icon: table },
  { label: "Toggle Editing", icon: pencil },
  { label: "Save As...", hot: true },
  { label: "Save As Layer Definition File..." },
  { label: "Filter..." },
  { label: "Show Feature Count" },
  null,
  { label: "InaSAFE", sub: true },
  null,
  { label: "Properties" },
  { label: "Rename" },
];

function ContextMenu() {
  return (
    <div role="menu" className="absolute left-[202px] top-[141px] flex w-[203px] flex-col border border-[#c4c4c4] bg-[#f0f0f0] px-px pb-px pt-[2px] font-['Open_Sans',sans-serif] text-[11px] leading-[18px] text-[#1c1c1c] shadow-[2px_2px_2px_rgba(0,0,0,0.5)]">
      {entries.map((e, i) =>
        e === null ? (
          <div key={i} role="separator" className="ml-[23px] mr-[2px] h-[6px] pt-[2px]">
            <div className="h-px bg-[#d4d4d4]" />
          </div>
        ) : (
          <button
            key={i}
            type="button"
            role="menuitem"
            className={`mr-px flex items-center whitespace-nowrap pr-[8px] text-left ${e.icon ? "h-[19px]" : "h-[18px]"} ${e.hot ? "bg-[#91c9f7]" : ""}`}
          >
            <span className="flex w-[26px] pl-[2px]">{e.icon && <Icon art={e.icon} className="size-[14px]" />}</span>
            <span className="flex-1">{e.label}</span>
            {e.sub && (
              <svg viewBox="0 0 4 6" className="h-[6px] w-[4px]" aria-hidden="true">
                <path d="M0 0l4 3-4 3z" fill="#111" />
              </svg>
            )}
          </button>
        ),
      )}
    </div>
  );
}

const menus = ["Project", "Edit", "View", "Layer", "Settings", "Plugins", "Vector", "Raster", "Database", "Web", "Processing", "Help"];

const panelTools: Tool[] = [
  { name: "Open layer styling", icon: I.style },
  { name: "Manage visibility", icon: I.eye },
  { name: "Filter legend", icon: I.filter },
  { name: "Filter by expression", icon: I.exprFilter, drop: true },
  { name: "Expand all", icon: I.expand },
  { name: "Collapse all", icon: I.collapse },
  { name: "Remove layer", icon: I.remove },
];

function SideButton({ t }: { t: Tool }) {
  return (
    <button type="button" aria-label={t.name} className={`flex min-h-0 flex-1 items-center ${t.drop ? "gap-[4px] pl-[3px]" : "pl-[8px]"}`}>
      <Icon art={t.icon} />
      {t.drop && <Caret />}
    </button>
  );
}

const Check = () => (
  <svg viewBox="0 0 12 12" className="pointer-events-none col-start-1 row-start-1 size-[10px] place-self-center" aria-hidden="true">
    <path d="M2 6.200l2.800 2.800L10.500 3" fill="none" stroke="#222" strokeWidth="1.300" />
  </svg>
);

function Tick({ id, label }: { id: string; label?: string }) {
  return (
    <span className="grid">
      <input id={id} type="checkbox" defaultChecked aria-label={label} className="col-start-1 row-start-1 size-[12px] appearance-none border border-[#333] bg-white" />
      <Check />
    </span>
  );
}

export default function App() {
  return (
    <div className="relative flex h-screen flex-col bg-white pb-[6px] pl-[5px] pr-[6px] pt-[6px] font-['Noto_Sans',sans-serif] text-[9px] leading-[14px] text-[#111]">
      {/* title bar */}
      <header className="flex h-[22px] items-center pl-[2px]">
        <svg viewBox="0 0 14 16" className="h-[15px] w-[13px]" aria-hidden="true">
          <path d="M1 6c1-4 8-5 11-4 1 5-1 10-6 11-4 .5-6-3-5-7z" fill="#c8d93f" />
          <path d="M4 8c0-2 2-3 4-3s3 2 2 4-6 3-6-1z" fill="#f4f6b2" />
          <path d="M2 15L12 1" stroke="#23671f" strokeWidth="2" />
          <path d="M8 11l5 4" stroke="#e0c22f" strokeWidth="2" />
        </svg>
        <h1 className="ml-[4px] flex-1 font-['Open_Sans',sans-serif] text-[11px]">QGIS 2.14.22-Essen</h1>
        <div className="flex items-center gap-[33px] pr-[18px]">
          <button type="button" aria-label="Minimize"><svg viewBox="0 0 10 10" className="size-[10px]"><path d="M0 5h10" stroke="#111" /></svg></button>
          <button type="button" aria-label="Restore"><svg viewBox="0 0 10 10" className="size-[10px]"><path d="M.5 2.500h7v7h-7zM2.500 2.500v-2h7v7h-2" fill="none" stroke="#111" /></svg></button>
          <button type="button" aria-label="Close"><svg viewBox="0 0 10 10" className="size-[10px]"><path d="M.5.5l9 9M9.500.5l-9 9" stroke="#111" /></svg></button>
        </div>
      </header>

      <nav className="flex h-[17px] items-center gap-[12px] pb-px pl-[5px]">
        {menus.map((m) => (
          <button key={m} type="button">{m}</button>
        ))}
      </nav>

      {/* tool bars */}
      <div className="flex h-[25px] border-b border-[#c9c9c9] bg-[#f0f0f0]">
        <ToolGroup tools={fileTools} width="w-[148px]" />
        <ToolGroup tools={navTools} width="w-[285px]" />
        <ToolGroup tools={attributeTools} width="w-[363px]" />
        <ToolGroup tools={[{ name: "Help", icon: I.help }]} width="w-[32px]" tail="pr-[2px]" />
        <ToolGroup tools={labelTools} width="w-[171px]" />
        <ToolGroup tools={rasterTools} width="w-[238px]" last />
      </div>
      <div className="flex h-[26px] border-b-2 border-[#a9abb0] bg-[#f0f0f0]">
        <ToolGroup tools={editTools} width="w-[273px]" />
        <ToolGroup tools={advancedTools} width="w-[422px]" />
        <ToolGroup tools={[{ name: "Plugin", icon: I.plugin }]} width="w-[51px]" tail="pr-[20px]" />
        <ToolGroup tools={webTools} width="w-[80px]" />
        <ToolGroup tools={pluginTools} width="w-[102px]" />
        <ToolGroup tools={safeTools} width="w-[192px]" last />
      </div>

      <div className="flex min-h-0 flex-1">
        <aside className="flex w-[37px] flex-col border-r border-[#999] bg-[#f0f0f0]">
          <span className="mx-[2px] mt-[1px] h-[2px] border-t-2 border-dotted border-[#c4c4c4]" />
          <div className="mt-[3px] flex h-[289px] flex-col">
            {layerTools.map((t) => <SideButton key={t.name} t={t} />)}
          </div>
          <div className="border-t border-[#b5b5b5]" />
          <span className="mx-[2px] mb-[4px] mt-[3px] h-[2px] border-t-2 border-dotted border-[#c4c4c4]" />
          <div className="flex h-[89px] flex-col">
            {sideTools.map((t) => <SideButton key={t.name} t={t} />)}
          </div>
        </aside>

        <section className="flex w-[170px] flex-col bg-[#f0f0f0]">
          <div className="mt-px flex h-[15px] items-center bg-[#d6d6d6] pl-[2px] pr-[2px]">
            <h2 className="flex-1">Layers Panel</h2>
            <button type="button" aria-label="Float panel" className="mr-[5px]"><svg viewBox="0 0 8 8" className="size-[7px]"><path d="M.7 3h4.600v4.300H.7zM2.700 3V1h4.600v4.300H5.300" fill="none" stroke="#111" strokeWidth="1.400" /></svg></button>
            <button type="button" aria-label="Close panel"><svg viewBox="0 0 8 8" className="size-[8px]"><path d="M1 1l6 6M7 1L1 7" stroke="#111" strokeWidth="1.600" /></svg></button>
          </div>
          <div className="flex h-[22px] items-center gap-[4px] border-b border-[#cfcfcf] pl-[3px] pt-px">
            {panelTools.map((t) => (
              <button key={t.name} type="button" aria-label={t.name} className={`flex items-center ${t.drop ? "gap-[4px]" : ""}`}>
                <Icon art={t.icon} className="size-[13px]" />
                {t.drop && <Caret />}
              </button>
            ))}
          </div>
          <div className="mt-[4px] min-h-0 flex-1 border-r border-t border-[#999] bg-white">
            <div className="ml-[17px] flex h-[14px] items-center bg-[#cce8ff]">
              <Tick id="layer" label="Batas Kota Semarang visible" />
              <span className="ml-[5px] size-[13px] border border-[#5aa9a6] bg-[#58e0da]" />
              <label htmlFor="layer" className="ml-[4px] whitespace-nowrap font-['DejaVu_Sans_Condensed','DejaVu_Sans',sans-serif] font-bold underline">Batas Kota Semarang</label>
            </div>
          </div>
        </section>

        <div className="w-[4px] bg-[#f0f0f0]" />
        <main className="min-w-0 flex-1 border-l border-r border-[#8e9096] bg-white">
          <svg viewBox="217 96 1203 683" preserveAspectRatio="xMinYMin meet" className="h-full w-full" role="img" aria-label="Map of Kota Semarang">
            <polygon points={outline} fill="#6affcc" stroke="#1b2b26" strokeWidth="1.200" strokeLinejoin="round" />
            <path d="M544 131l6 .5 6 2" stroke="#111" strokeWidth="1.800" fill="none" />
            <circle cx="454" cy="315.800" r="0.900" fill="#111" />
          </svg>
        </main>
      </div>

      <footer className="flex h-[25px] items-center border-b border-t border-b-[#222] border-t-[#b5b5b9] bg-[#f0f0f0] pl-[3px] pr-[10px]">
        <p className="flex-1">Toggles the editing state of the current layer</p>
        <label htmlFor="coord" className="mr-[2px]">Coordinate</label>
        <input id="coord" defaultValue="110.2148,-6.9487" className="h-[16px] w-[213px] border border-[#777] bg-white text-center" />
        <button type="button" aria-label="Toggle extents" className="flex h-[17px] w-[13px] items-center justify-center border border-[#c8c8c8] bg-[#e4e4e4]">
          <svg viewBox="0 0 12 14" className="h-[14px] w-[12px]"><g fill="none" stroke="#333" strokeWidth="1.300"><circle cx="4" cy="4" r="2.500" /><path d="M2 6l6 7M6 3l5 7M10 1L5 8" /><circle cx="8" cy="10" r="2.500" /></g></svg>
        </button>
        <label htmlFor="scale" className="ml-[8px] mr-[6px]">Scale</label>
        <span className="grid">
          <select id="scale" className="col-start-1 row-start-1 h-[16px] w-[73px] appearance-none border border-[#777] bg-white pl-[4px]">
            <option>1:99.887</option>
          </select>
          <svg viewBox="0 0 8 5" className="pointer-events-none col-start-1 row-start-1 mr-[3px] h-[5px] w-[8px] self-center justify-self-end"><path d="M.5.5L4 4 7.500.5" fill="none" stroke="#555" /></svg>
        </span>
        <label htmlFor="rotation" className="ml-[7px] mr-[6px]">Rotation</label>
        <span className="flex h-[20px] border border-[#777] bg-white">
          <input id="rotation" defaultValue="0,0" className="w-[62px] bg-white pl-[2px]" />
          <span className="flex w-[12px] flex-col bg-[#f0f0f0]">
            <button type="button" aria-label="Increase rotation" className="flex flex-1 items-center justify-center border border-[#c8c8c8]"><svg viewBox="0 0 6 4" className="h-[4px] w-[6px]"><path d="M0 4h6L3 0z" /></svg></button>
            <button type="button" aria-label="Decrease rotation" className="flex flex-1 items-center justify-center border border-[#c8c8c8]"><svg viewBox="0 0 6 4" className="h-[4px] w-[6px]"><path d="M0 0h6L3 4z" /></svg></button>
          </span>
        </span>
        <span className="ml-[5px] mr-[4px]"><Tick id="render" /></span>
        <label htmlFor="render">Render</label>
        <button type="button" className="ml-[13px] flex items-center gap-[3px]">
          <svg viewBox="0 0 14 14" className="size-[14px]"><circle cx="7" cy="7" r="5" fill="#eee" stroke="#222" strokeWidth="2" /><path d="M7 0v14M0 7h14M4.500 3v8M9.500 3v8" stroke="#333" strokeWidth="1.200" /></svg>
          EPSG:4326 (OTF)
        </button>
        <button type="button" aria-label="Messages" className="ml-[15px]">
          <svg viewBox="0 0 15 14" className="h-[14px] w-[15px]"><path d="M7.500 1C12 1 14.500 3 14.500 6s-1 4-2.500 4.500l1 3-4-2.500C3 11.500.5 9 .5 6S3 1 7.500 1z" fill="#5e5e5e" /><path d="M4 6h1.500M6.800 6h1.500M9.600 6h1.500" stroke="#fff" strokeWidth="1.500" /></svg>
        </button>
      </footer>

      <ContextMenu />
      <svg viewBox="0 0 226 24" className="pointer-events-none absolute left-[193px] top-[330px] h-[24px] w-[226px]" aria-hidden="true">
        <rect x="2.500" y="2.500" width="221" height="19" fill="none" stroke="#f00" strokeWidth="5" strokeDasharray="5.500 4.200" />
      </svg>
    </div>
  );
}
